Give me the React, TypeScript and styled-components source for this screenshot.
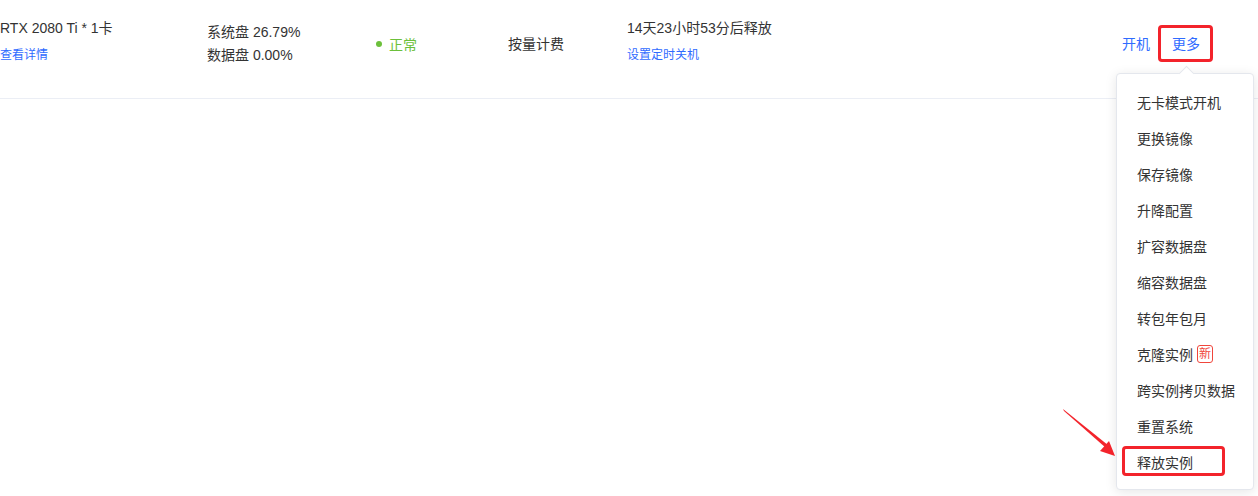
import styled, { createGlobalStyle } from "styled-components";

const GlobalStyle = createGlobalStyle`
  html, body {
    margin: 0;
    padding: 0;
    background: #fff;
  }
  body {
    font-family: "Liberation Sans", "Noto Sans CJK SC", sans-serif;
    color: #333;
    width: 1258px;
    height: 496px;
    overflow: hidden;
  }
`;

const Page = styled.div`
  position: relative;
  width: 1258px;
  height: 496px;
`;

const Row = styled.div`
  display: flex;
  align-items: center;
  height: 99px;
  padding-bottom: 11px;
  box-sizing: border-box;
  border-bottom: 1px solid #ebeef5;
  font-size: 14px;
`;

const Cell = styled.div<{ $w?: number; $gap?: number; $lift?: number }>`
  display: flex;
  flex-direction: column;
  justify-content: center;
  width: ${(p) => (p.$w ? `${p.$w}px` : "auto")};
  gap: ${(p) => p.$gap ?? 0}px;
  margin-bottom: ${(p) => (p.$lift ?? 0) * 2}px;
  flex-shrink: 0;
`;

const Main = styled.span`
  font-size: 14px;
  line-height: 20px;
  color: #333;
`;

const Link = styled.a`
  font-size: 12px;
  line-height: 16px;
  color: #2f6bff;
  cursor: pointer;
`;

const Status = styled.span`
  display: flex;
  align-items: center;
  gap: 7px;
  color: #6cc03b;
  font-size: 14px;
  &::before {
    content: "";
    width: 6px;
    height: 6px;
    border-radius: 50%;
    background: #6cc03b;
  }
`;

const Actions = styled.div`
  margin-left: auto;
  margin-right: 45px;
  display: flex;
  align-items: center;
  gap: 8px;
`;

const ActionWrap = styled.div`
  position: relative;
`;

const Action = styled.a<{ $marked?: boolean }>`
  display: block;
  font-size: 14px;
  line-height: 20px;
  color: #2f6bff;
  padding: ${(p) => (p.$marked ? "6px 10px 5px 11px" : "6px 0 5px")};
  border: ${(p) => (p.$marked ? "3px solid #f3232b" : "none")};
  border-radius: 4px;
  cursor: pointer;
`;

const Menu = styled.ul`
  position: absolute;
  top: 48px;
  left: -42px;
  width: 138px;
  margin: 0;
  padding: 10px 0 9px;
  list-style: none;
  background: #fff;
  border: 1px solid #e4e7ed;
  border-radius: 4px;
  box-shadow: 0 2px 12px rgba(0, 0, 0, 0.1);
  box-sizing: border-box;
  &::before {
    content: "";
    position: absolute;
    top: -6px;
    left: 64px;
    width: 10px;
    height: 10px;
    background: #fff;
    border-left: 1px solid #e4e7ed;
    border-top: 1px solid #e4e7ed;
    transform: rotate(45deg);
  }
`;

const MenuItem = styled.li<{ $marked?: boolean }>`
  position: relative;
  display: flex;
  align-items: center;
  gap: 4px;
  height: 36px;
  padding-left: 20px;
  font-size: 14px;
  color: #333;
  cursor: pointer;
  &::after {
    content: "";
    display: ${(p) => (p.$marked ? "block" : "none")};
    position: absolute;
    left: 5px;
    right: 28px;
    top: 2px;
    bottom: 4px;
    border: 3px solid #f3232b;
    border-radius: 4px;
  }
`;

const NewBadge = styled.span`
  display: inline-flex;
  align-items: center;
  justify-content: center;
  height: 16px;
  padding: 0 1px;
  border: 1px solid #f0463c;
  border-radius: 3px;
  color: #f0463c;
  font-size: 12px;
  line-height: 16px;
`;

const Pointer = styled.svg`
  position: absolute;
  left: 1060px;
  top: 406px;
`;

const items = [
  "无卡模式开机",
  "更换镜像",
  "保存镜像",
  "升降配置",
  "扩容数据盘",
  "缩容数据盘",
  "转包年包月",
  "克隆实例",
  "跨实例拷贝数据",
  "重置系统",
  "释放实例",
];

export default function App() {
  return (
    <Page>
      <GlobalStyle />
      <Row>
        <Cell $w={207} $gap={9} $lift={3.5}>
          <Main>RTX 2080 Ti * 1卡</Main>
          <Link>查看详情</Link>
        </Cell>
        <Cell $w={169} $gap={3}>
          <Main>系统盘 26.79%</Main>
          <Main>数据盘 0.00%</Main>
        </Cell>
        <Cell $w={132}>
          <Status>正常</Status>
        </Cell>
        <Cell $w={119}>
          <Main>按量计费</Main>
        </Cell>
        <Cell $gap={9} $lift={3.5}>
          <Main>14天23小时53分后释放</Main>
          <Link>设置定时关机</Link>
        </Cell>
        <Actions>
          <Action>开机</Action>
          <ActionWrap>
            <Action $marked>更多</Action>
            <Menu>
              {items.map((t) => (
                <MenuItem key={t} $marked={t === "释放实例"}>
                  {t}
                  {t === "克隆实例" && <NewBadge>新</NewBadge>}
                </MenuItem>
              ))}
            </Menu>
          </ActionWrap>
        </Actions>
      </Row>
      <Pointer width="64" height="56" viewBox="0 0 64 56">
        <path d="M3 3 L4 5 L46 42 L48.5 39.5 Z" fill="#f3232b" />
        <path d="M40 45 L55 50 L49 35 Z" fill="#f3232b" />
      </Pointer>
    </Page>
  );
}
